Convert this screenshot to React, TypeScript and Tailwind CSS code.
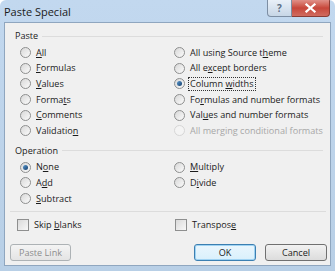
import React from 'react';

const font = { fontFamily: '"Open Sans", "Noto Sans", sans-serif' };

const Key = ({ children }: { children: React.ReactNode }) => (
  <span className="underline underline-offset-[1px]">{children}</span>
);

const Radio = ({ checked, disabled }: { checked?: boolean; disabled?: boolean }) => (
  <span
    className={`flex h-[11px] w-[11px] shrink-0 items-center justify-center rounded-full border ${
      disabled
        ? 'border-[#d6d6d6] bg-[#f4f4f4]'
        : 'border-[#8e8f8f] bg-gradient-to-br from-[#d8d8d8] to-[#fbfbfb]'
    }`}
  >
    {checked && (
      <span className="h-[5px] w-[5px] rounded-full bg-gradient-to-br from-[#5b9bd1] to-[#153e6b]" />
    )}
  </span>
);

const Option = ({
  label,
  checked,
  disabled,
  focused,
}: {
  label: React.ReactNode;
  checked?: boolean;
  disabled?: boolean;
  focused?: boolean;
}) => (
  <div className="flex h-[15.6px] items-center gap-[3px] whitespace-nowrap">
    <Radio checked={checked} disabled={disabled} />
    <span
      className={`leading-[12px] ${disabled ? 'text-[#a7a7a7]' : 'text-[#1b1b1b]'} ${
        focused ? 'border border-dotted border-[#333] px-[1px]' : 'border border-transparent px-[1px]'
      }`}
    >
      {label}
    </span>
  </div>
);

const Header = ({ children }: { children: React.ReactNode }) => (
  <div className="flex h-[14px] items-center gap-[4px] pl-[5px] pr-[4px] text-[#1b1b1b]">
    <span>{children}</span>
    <span className="h-px flex-1 bg-[#dcdcdc]" />
  </div>
);

const Check = ({ label }: { label: React.ReactNode }) => (
  <div className="flex h-[15px] items-center gap-[5px] whitespace-nowrap">
    <span className="h-[12px] w-[12px] shrink-0 border border-[#8e8f8f] bg-gradient-to-br from-[#dadada] to-[#f8f8f8]" />
    <span className="text-[#1b1b1b]">{label}</span>
  </div>
);

export default function App() {
  return (
    <div
      className="flex h-[271px] w-[335px] flex-col overflow-hidden rounded-t-[6px] bg-gradient-to-b from-[#c2d8ef] to-[#b8cfe6] text-[9.1px]"
      style={font}
    >
      {/* title bar */}
      <div className="flex h-[22px] items-start justify-between">
        <span className="mt-[4px] pl-[4px] text-[11px] text-[#1a1a1a]">Paste Special</span>
        <div className="mr-[5px] flex">
          <div className="flex h-[17px] w-[25px] items-center justify-center rounded-bl-[4px] border border-t-0 border-[#7d8ea3] bg-gradient-to-b from-[#e9f0f8] to-[#c7d6e6] text-[10px] font-bold text-[#5c6e84]">
            ?
          </div>
          <div className="flex h-[17px] w-[38px] items-center justify-center rounded-br-[4px] border border-l-0 border-t-0 border-[#8a3b33] bg-gradient-to-b from-[#e09088] via-[#c7463a] to-[#d06b5f]">
            <svg width="11" height="10" viewBox="0 0 11 10">
              <path d="M1.5 1.5 L9.5 8.5 M9.5 1.5 L1.5 8.5" stroke="#fff" strokeWidth="2.2" strokeLinecap="square" />
            </svg>
          </div>
        </div>
      </div>

      {/* client area */}
      <div className="mx-[4px] flex h-[244px] flex-col border border-[#8fa6bf] bg-[#f0f0f0] pl-[5px] pr-[3px] pt-[6px]">
        <Header>Paste</Header>
        <div className="mt-[2px] grid grid-cols-[154px_1fr] pl-[10px]">
          <div className="flex flex-col">
            <Option label={<><Key>A</Key>ll</>} />
            <Option label={<><Key>F</Key>ormulas</>} />
            <Option label={<><Key>V</Key>alues</>} />
            <Option label={<>Forma<Key>t</Key>s</>} />
            <Option label={<><Key>C</Key>omments</>} />
            <Option label={<>Validatio<Key>n</Key></>} />
          </div>
          <div className="flex flex-col">
            <Option label={<>All using Source t<Key>h</Key>eme</>} />
            <Option label={<>All e<Key>x</Key>cept borders</>} />
            <Option checked focused label={<>Column <Key>w</Key>idths</>} />
            <Option label={<>Fo<Key>r</Key>mulas and number formats</>} />
            <Option label={<>Val<Key>u</Key>es and number formats</>} />
            <Option disabled label="All merging conditional formats" />
          </div>
        </div>

        <div className="mt-[5px]">
          <Header>Operation</Header>
        </div>
        <div className="mt-[2px] grid grid-cols-[154px_1fr] pl-[10px]">
          <div className="flex flex-col">
            <Option checked label={<>N<Key>o</Key>ne</>} />
            <Option label={<>A<Key>d</Key>d</>} />
            <Option label={<><Key>S</Key>ubtract</>} />
          </div>
          <div className="flex flex-col">
            <Option label={<><Key>M</Key>ultiply</>} />
            <Option label={<>D<Key>i</Key>vide</>} />
          </div>
        </div>

        <div className="mr-[1px] mt-[5px] h-px bg-[#dcdcdc]" />

        <div className="mt-[5px] grid grid-cols-[158px_1fr] pl-[7px]">
          <Check label={<>Skip <Key>b</Key>lanks</>} />
          <Check label={<>Transpos<Key>e</Key></>} />
        </div>

        <div className="mt-[12px] flex items-center">
          <button className="h-[17px] w-[61px] rounded-[3px] border border-[#adb2b5] bg-gradient-to-b from-[#f4f4f4] to-[#e4e4e4] text-[9.1px] text-[#8d8d8d]">
            Paste Link
          </button>
          <div className="flex-1" />
          <button className="h-[17px] w-[62px] rounded-[3px] border border-[#3c7fb1] bg-gradient-to-b from-[#eaf6fd] to-[#d9f0fc] text-[9.1px] text-[#1b1b1b] shadow-[inset_0_0_0_1px_#9fd3f3]">
            OK
          </button>
          <button className="ml-[9px] h-[17px] w-[62px] rounded-[3px] border border-[#707070] bg-gradient-to-b from-[#f2f2f2] to-[#dcdcdc] text-[9.1px] text-[#1b1b1b]">
            Cancel
          </button>
        </div>
      </div>
    </div>
  );
}
